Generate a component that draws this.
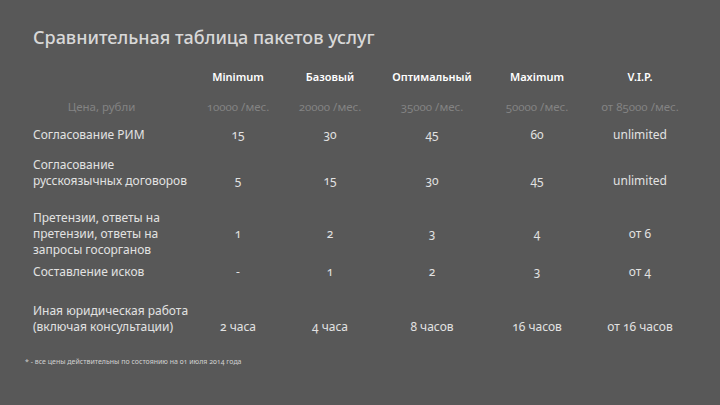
import React from 'react'

const plans = ['Minimum', 'Базовый', 'Оптимальный', 'Maximum', 'V.I.P.']
const prices = ['10000 /мес.', '20000 /мес.', '35000 /мес.', '50000 /мес.', 'от 85000 /мес.']

// row heights are chosen so the bottom lines sit where the slide has them
const rows: { label: string[]; values: string[]; h: string; pad?: string }[] = [
	{ label: ['Согласование РИМ'], values: ['15', '30', '45', '60', 'unlimited'], h: 'h-[28px]' },
	{ label: ['Согласование', 'русскоязычных договоров'], values: ['5', '15', '30', '45', 'unlimited'], h: 'h-[46px]' },
	{ label: ['Претензии, ответы на', 'претензии, ответы на', 'запросы госорганов'], values: ['1', '2', '3', '4', 'от 6'], h: 'h-[69px]', pad: 'pb-[16px]' },
	{ label: ['Составление исков'], values: ['-', '1', '2', '3', 'от 4'], h: 'h-[22px]' },
	{ label: ['Иная юридическая работа', '(включая консультации)'], values: ['2 часа', '4 часа', '8 часов', '16 часов', 'от 16 часов'], h: 'h-[55px]' },
]

const cols = 'grid grid-cols-[157px_96px_88px_116px_94px_112px] items-end'

export default function App() {
	return (
		<div className="h-[405px] w-[720px] overflow-hidden bg-[#585858] font-['Noto_Sans',sans-serif] oldstyle-nums">
			<h1 className="pl-[33px] pt-[25px] text-[18px] leading-[24px] font-medium text-[#d8d8d8]">
				Сравнительная таблица пакетов услуг
			</h1>

			<div className="pl-[33px] pt-[20px]">
				{/* header */}
				<div className={`${cols} h-[16px] text-[11px] leading-[16px] font-semibold text-white`}>
					<div></div>
					{plans.map((p) => (
						<div key={p} className="text-center">{p}</div>
					))}
				</div>

				{/* prices */}
				<div className={`${cols} h-[30px] text-[11.5px] leading-[16px] text-[#838383]`}>
					<div className="pr-[20px] text-center">Цена, рубли</div>
					{prices.map((p) => (
						<div key={p} className="text-center">{p}</div>
					))}
				</div>

				{rows.map((r, i) => (
					<div key={i} className={`${cols} ${r.h} text-[12px] leading-[16px] text-[#e2e2e2]`}>
						<div>
							{r.label.map((l) => (
								<div key={l}>{l}</div>
							))}
						</div>
						{r.values.map((v, j) => (
							<div key={j} className={`text-center ${r.pad ?? ''}`}>{v}</div>
						))}
					</div>
				))}
			</div>

			<div className="pl-[25px] pt-[23px] text-[7px] leading-[8px] text-[#d0d0d0]">
				* - все цены действительны по состоянию на 01 июля 2014 года
			</div>
		</div>
	)
}
